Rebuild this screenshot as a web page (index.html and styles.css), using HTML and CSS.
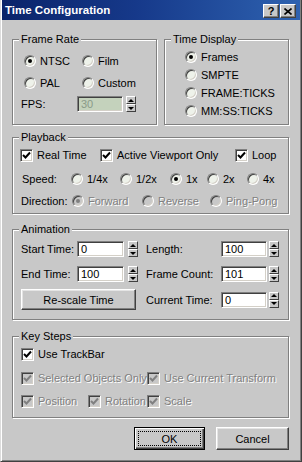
FILE: index.html
```html
<!DOCTYPE html>
<html>
<head>
<meta charset="utf-8">
<title>Time Configuration</title>
<link rel="stylesheet" href="styles.css">
</head>
<body>
<div class="window">
  <div class="titlebar">
    <span class="title">Time Configuration</span>
    <div class="tb-buttons">
      <span class="tb-btn">?</span>
      <span class="tb-btn"><svg width="8" height="7" viewBox="0 0 8 7"><path d="M0.5 0.5 L7.5 6.5 M7.5 0.5 L0.5 6.5" stroke="#000" stroke-width="1.6"/></svg></span>
    </div>
  </div>

  <div class="client">
    <div class="top-row">
      <div class="group g-framerate">
        <span class="legend">Frame Rate</span>
        <div class="fr-grid">
          <div class="opt"><span class="radio on"></span>NTSC</div>
          <div class="opt"><span class="radio"></span>Film</div>
          <div class="opt"><span class="radio"></span>PAL</div>
          <div class="opt"><span class="radio"></span>Custom</div>
        </div>
        <div class="field fps">
          <span class="flabel w-fps">FPS:</span>
          <span class="input disabled">30</span>
          <span class="spinner"><span class="sp-up"></span><span class="sp-down"></span></span>
        </div>
      </div>

      <div class="group g-timedisplay">
        <span class="legend">Time Display</span>
        <div class="td-list">
          <div class="opt"><span class="radio on"></span>Frames</div>
          <div class="opt"><span class="radio"></span>SMPTE</div>
          <div class="opt"><span class="radio"></span>FRAME:TICKS</div>
          <div class="opt"><span class="radio"></span>MM:SS:TICKS</div>
        </div>
      </div>
    </div>

    <div class="group g-playback">
      <span class="legend">Playback</span>
      <div class="row pb-row1">
        <div class="opt w-realtime"><span class="check on"><svg width="9" height="9" viewBox="0 0 9 9"><path d="M1 4 L3.5 6.5 L8 1.5" fill="none" stroke="#000" stroke-width="2"/></svg></span>Real Time</div>
        <div class="opt w-active"><span class="check on"><svg width="9" height="9" viewBox="0 0 9 9"><path d="M1 4 L3.5 6.5 L8 1.5" fill="none" stroke="#000" stroke-width="2"/></svg></span>Active Viewport Only</div>
        <div class="opt"><span class="check on"><svg width="9" height="9" viewBox="0 0 9 9"><path d="M1 4 L3.5 6.5 L8 1.5" fill="none" stroke="#000" stroke-width="2"/></svg></span>Loop</div>
      </div>
      <div class="row pb-row2">
        <span class="rlabel w-speed">Speed:</span>
        <div class="opt w-q"><span class="radio"></span>1/4x</div>
        <div class="opt w-h"><span class="radio"></span>1/2x</div>
        <div class="opt w-1"><span class="radio on"></span>1x</div>
        <div class="opt w-2"><span class="radio"></span>2x</div>
        <div class="opt"><span class="radio"></span>4x</div>
      </div>
      <div class="row pb-row3">
        <span class="rlabel w-dir">Direction:</span>
        <div class="opt dis w-fwd"><span class="radio dis on"></span>Forward</div>
        <div class="opt dis w-rev"><span class="radio dis"></span>Reverse</div>
        <div class="opt dis"><span class="radio dis"></span>Ping-Pong</div>
      </div>
    </div>

    <div class="group g-animation">
      <span class="legend">Animation</span>
      <div class="row an-row1">
        <div class="field fa">
          <span class="flabel w-la">Start Time:</span>
          <span class="input">0</span>
          <span class="spinner"><span class="sp-up"></span><span class="sp-down"></span></span>
        </div>
        <div class="field fb">
          <span class="flabel w-lb">Length:</span>
          <span class="input">100</span>
          <span class="spinner"><span class="sp-up"></span><span class="sp-down"></span></span>
        </div>
      </div>
      <div class="row an-row2">
        <div class="field fa">
          <span class="flabel w-la">End Time:</span>
          <span class="input">100</span>
          <span class="spinner"><span class="sp-up"></span><span class="sp-down"></span></span>
        </div>
        <div class="field fb">
          <span class="flabel w-lb">Frame Count:</span>
          <span class="input">101</span>
          <span class="spinner"><span class="sp-up"></span><span class="sp-down"></span></span>
        </div>
      </div>
      <div class="row an-row3">
        <span class="button rescale">Re-scale Time</span>
        <div class="field fb2">
          <span class="flabel w-lb">Current Time:</span>
          <span class="input">0</span>
          <span class="spinner"><span class="sp-up"></span><span class="sp-down"></span></span>
        </div>
      </div>
    </div>

    <div class="group g-keysteps">
      <span class="legend">Key Steps</span>
      <div class="row ks-row1">
        <div class="opt"><span class="check on"><svg width="9" height="9" viewBox="0 0 9 9"><path d="M1 4 L3.5 6.5 L8 1.5" fill="none" stroke="#000" stroke-width="2"/></svg></span>Use TrackBar</div>
      </div>
      <div class="row ks-row2">
        <div class="opt dis w-sel"><span class="check dis"><svg width="9" height="9" viewBox="0 0 9 9"><path d="M1 4 L3.5 6.5 L8 1.5" fill="none" stroke="#808080" stroke-width="2"/></svg></span>Selected Objects Only</div>
        <div class="opt dis"><span class="check dis"><svg width="9" height="9" viewBox="0 0 9 9"><path d="M1 4 L3.5 6.5 L8 1.5" fill="none" stroke="#808080" stroke-width="2"/></svg></span>Use Current Transform</div>
      </div>
      <div class="row ks-row3">
        <div class="opt dis w-pos"><span class="check dis"><svg width="9" height="9" viewBox="0 0 9 9"><path d="M1 4 L3.5 6.5 L8 1.5" fill="none" stroke="#808080" stroke-width="2"/></svg></span>Position</div>
        <div class="opt dis w-rot"><span class="check dis"><svg width="9" height="9" viewBox="0 0 9 9"><path d="M1 4 L3.5 6.5 L8 1.5" fill="none" stroke="#808080" stroke-width="2"/></svg></span>Rotation</div>
        <div class="opt dis"><span class="check dis"><svg width="9" height="9" viewBox="0 0 9 9"><path d="M1 4 L3.5 6.5 L8 1.5" fill="none" stroke="#808080" stroke-width="2"/></svg></span>Scale</div>
      </div>
    </div>

    <div class="actions">
      <span class="button default"><span class="focus">OK</span></span>
      <span class="button cancel">Cancel</span>
    </div>
  </div>
</div>
</body>
</html>
```

FILE: styles.css
```css
* { box-sizing: border-box; }
html, body { margin: 0; padding: 0; }
body {
  width: 302px;
  height: 462px;
  overflow: hidden;
  background: #c8c8c8;
  font-family: "Liberation Sans", Arial, sans-serif;
  font-size: 11px;
  color: #000;
}
.window {
  width: 302px;
  height: 462px;
  background: #c8c8c8;
  border-left: 1px solid #dcdcdc;
  border-right: 1px solid #404040;
  border-bottom: 1px solid #404040;
  box-shadow: inset 1px 0 0 #fff, inset -1px -1px 0 #808080;
  padding: 0 1px 2px 1px;
  display: flex;
  flex-direction: column;
}
.titlebar {
  height: 20px;
  flex: none;
  background: linear-gradient(90deg, #0a246a 0%, #16398a 45%, #2e62b0 100%);
  display: flex;
  align-items: flex-start;
  justify-content: space-between;
  padding: 3px 4px 0 3px;
}
.title {
  color: #fff;
  font-weight: bold;
  font-size: 11.5px;
  line-height: 14px;
}
.tb-buttons { display: flex; gap: 1px; padding-top: 1px; }
.tb-btn {
  width: 16px;
  height: 14px;
  background: #c8c8c8;
  border: 1px solid;
  border-color: #fff #404040 #404040 #fff;
  box-shadow: inset -1px -1px 0 #808080;
  display: flex;
  align-items: center;
  justify-content: center;
  font-weight: bold;
  font-size: 11px;
  line-height: 11px;
}

.client {
  flex: 1;
  padding: 0 11px 0 10px;
  display: flex;
  flex-direction: column;
}

/* group box */
.group {
  position: relative;
  border: 1px solid #808080;
  box-shadow: inset 1px 1px 0 #fff, 1px 1px 0 #fff;
  flex: none;
}
.legend {
  position: absolute;
  top: -7px;
  left: 6px;
  padding: 0 2px;
  background: #c8c8c8;
  line-height: 13px;
  white-space: nowrap;
}
.row { display: flex; align-items: center; height: 16px; white-space: nowrap; }

.opt { display: flex; align-items: center; height: 16px; white-space: nowrap; }
.opt.dis { color: #808080; text-shadow: 1px 1px 0 #fff; }

/* radio */
.radio {
  width: 12px;
  height: 12px;
  border-radius: 50%;
  flex: none;
  margin-right: 4px;
  background: #eef2ea;
  border: 1px solid;
  border-color: #808080 #fff #fff #808080;
  box-shadow: inset 1px 1px 0 #404040, inset -1px -1px 0 #d4d0c8;
  display: flex;
  align-items: center;
  justify-content: center;
}
.radio.on::after {
  content: "";
  width: 4px;
  height: 4px;
  border-radius: 50%;
  background: #000;
}
.radio.dis { background: #c8c8c8; }
.radio.dis.on::after { background: #808080; }

/* checkbox */
.check {
  width: 13px;
  height: 13px;
  flex: none;
  margin-right: 4px;
  background: #fff;
  border: 1px solid;
  border-color: #808080 #fff #fff #808080;
  box-shadow: inset 1px 1px 0 #404040, inset -1px -1px 0 #d4d0c8;
  display: flex;
  align-items: center;
  justify-content: center;
}
.check svg { display: block; }
.check.dis { background: #c8c8c8; }

/* fields */
.field { display: flex; align-items: center; height: 16px; }
.flabel { flex: none; white-space: nowrap; }
.input {
  width: 47px;
  height: 16px;
  flex: none;
  background: #fff;
  border: 1px solid;
  border-color: #808080 #fff #fff #808080;
  box-shadow: inset 1px 1px 0 #404040, inset -1px -1px 0 #d4d0c8;
  padding: 0 3px;
  line-height: 14px;
}
.input.disabled { background: #c4d2bc; color: #8a9a88; }
.spinner {
  width: 10px;
  height: 16px;
  flex: none;
  margin-left: 3px;
  display: flex;
  flex-direction: column;
}
.sp-up, .sp-down {
  flex: 1;
  background: #c8c8c8;
  border: 1px solid;
  border-color: #fff #404040 #404040 #fff;
  display: flex;
  align-items: center;
  justify-content: center;
}
.sp-up::after {
  content: "";
  border-left: 3px solid transparent;
  border-right: 3px solid transparent;
  border-bottom: 3px solid #000;
}
.sp-down::after {
  content: "";
  border-left: 3px solid transparent;
  border-right: 3px solid transparent;
  border-top: 3px solid #000;
}

/* buttons */
.button {
  display: flex;
  align-items: center;
  justify-content: center;
  background: #c8c8c8;
  border: 1px solid;
  border-color: #fff #404040 #404040 #fff;
  box-shadow: inset -1px -1px 0 #808080, inset 1px 1px 0 #e4e4e4;
  white-space: nowrap;
  flex: none;
}

/* top row */
.top-row {
  display: flex;
  gap: 7px;
  margin-top: 19px;
  height: 86px;
  flex: none;
}
.g-framerate { width: 145px; padding: 13px 0 0 11px; }
.fr-grid {
  display: grid;
  grid-template-columns: 58px auto;
  grid-auto-rows: 16px;
  row-gap: 6px;
}
.fps { margin-top: 5px; margin-left: -3px; }
.w-fps { width: 56px; }
.fps .input { width: 46px; }
.g-timedisplay { width: 125px; padding: 9px 0 0 20px; }
.td-list { display: flex; flex-direction: column; gap: 2px; }

/* playback */
.g-playback { margin-top: 12px; height: 77px; padding: 9px 0 0 7px; }
.pb-row2 { margin-top: 8px; }
.pb-row3 { margin-top: 6px; }
.w-realtime { width: 80px; }
.w-active { width: 135px; }
.rlabel { flex: none; }
.w-speed { width: 51px; padding-left: 2px; }
.w-q { width: 49px; }
.w-h { width: 50px; }
.w-1 { width: 37px; }
.w-2 { width: 40px; }
.w-dir { width: 52px; padding-left: 1px; }
.w-fwd { width: 70px; }
.w-rev { width: 68px; }

/* animation */
.g-animation { margin-top: 15px; height: 91px; padding: 11px 0 0 8px; }
.an-row2 { margin-top: 9px; }
.an-row3 { margin-top: 7px; height: 21px; }
.w-la { width: 56px; }
.w-lb { width: 75px; }
.fa .spinner { margin-left: 4px; }
.fb { margin-left: 8px; }
.fb .input, .fb2 .input { width: 46px; }
.fb .spinner, .fb2 .spinner { margin-left: 2px; }
.rescale { width: 115px; height: 21px; }
.fb2 { margin-left: 10px; }

/* key steps */
.g-keysteps { margin-top: 16px; height: 82px; padding: 9px 0 0 8px; }
.ks-row2 { margin-top: 8px; }
.ks-row3 { margin-top: 7px; }
.w-sel { width: 126px; }
.w-pos { width: 67px; }
.w-rot { width: 59px; }

/* dialog buttons */
.actions {
  display: flex;
  justify-content: flex-end;
  gap: 11px;
  margin-top: 9px;
}
.actions .button { height: 23px; }
.default {
  width: 71px;
  border: 1px solid #000;
  box-shadow: inset 1px 1px 0 #fff, inset -1px -1px 0 #404040, inset -2px -2px 0 #808080;
  padding: 3px;
}
.focus {
  flex: 1;
  align-self: stretch;
  display: flex;
  align-items: center;
  justify-content: center;
  border: 1px dotted #000;
}
.cancel { width: 73px; }
```
